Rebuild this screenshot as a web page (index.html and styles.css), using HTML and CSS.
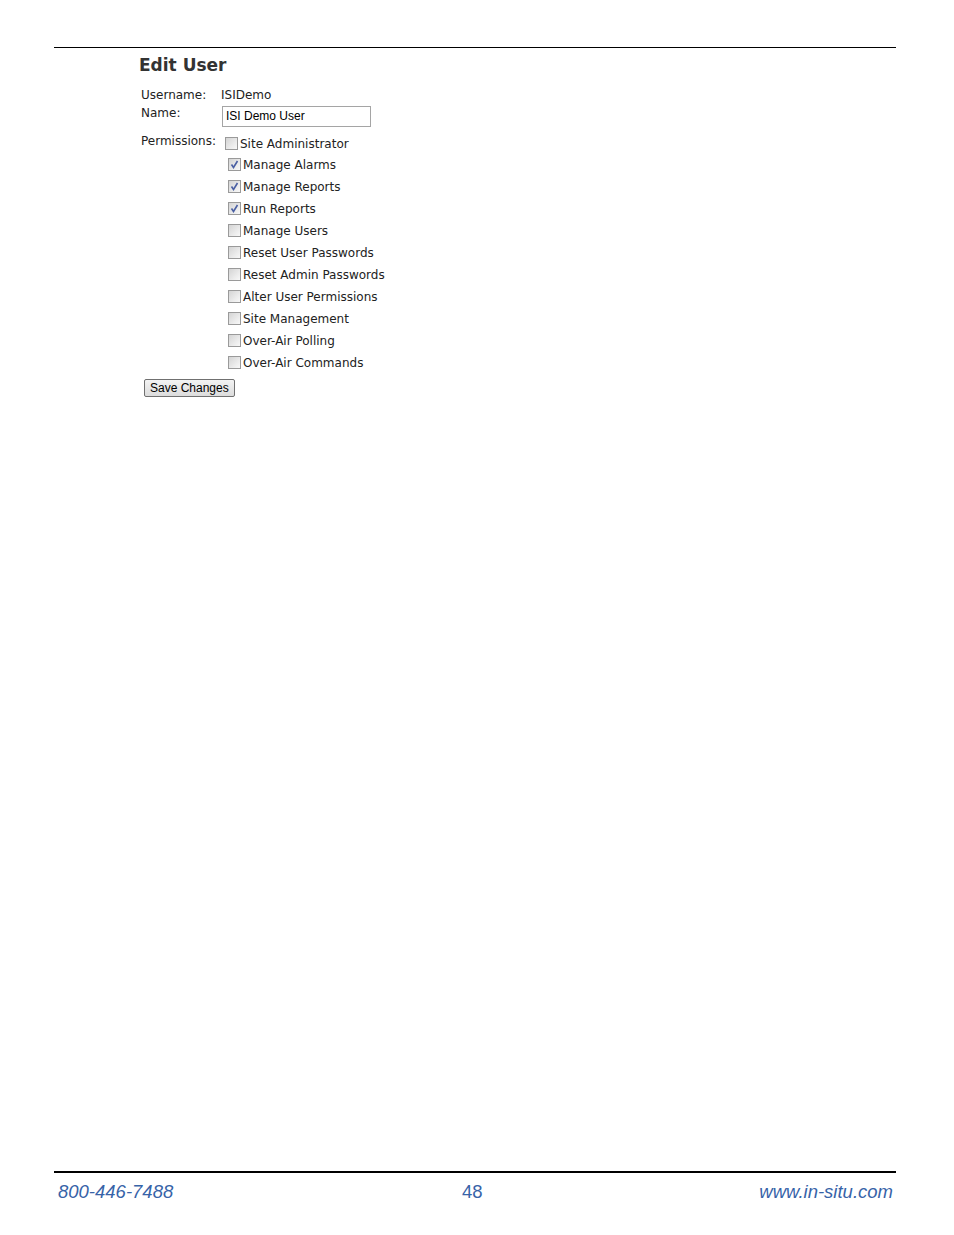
FILE: index.html
```html
<!DOCTYPE html>
<html>
<head>
<meta charset="utf-8">
<title>Edit User</title>
<link rel="stylesheet" href="styles.css">
</head>
<body>
<div class="page">
  <div class="rule-top"></div>
  <main class="content">
    <h1 class="title">Edit User</h1>
    <div class="form">
      <div class="row row-user">
        <div class="label">Username:</div>
        <div class="value">ISIDemo</div>
      </div>
      <div class="row row-name">
        <div class="label">Name:</div>
        <div class="value"><div class="input">ISI Demo User</div></div>
      </div>
      <div class="row row-perm">
        <div class="label">Permissions:</div>
        <div class="value">
          <div class="perm first"><span class="cb"></span>Site Administrator</div>
          <div class="perm"><span class="cb checked"><svg viewBox="0 0 13 13" width="13" height="13"><path d="M3.5 6.5 L5.5 9.5 L9.5 3" fill="none" stroke="#4a5fa3" stroke-width="1.6"/></svg></span>Manage Alarms</div>
          <div class="perm"><span class="cb checked"><svg viewBox="0 0 13 13" width="13" height="13"><path d="M3.5 6.5 L5.5 9.5 L9.5 3" fill="none" stroke="#4a5fa3" stroke-width="1.6"/></svg></span>Manage Reports</div>
          <div class="perm"><span class="cb checked"><svg viewBox="0 0 13 13" width="13" height="13"><path d="M3.5 6.5 L5.5 9.5 L9.5 3" fill="none" stroke="#4a5fa3" stroke-width="1.6"/></svg></span>Run Reports</div>
          <div class="perm"><span class="cb"></span>Manage Users</div>
          <div class="perm"><span class="cb"></span>Reset User Passwords</div>
          <div class="perm"><span class="cb"></span>Reset Admin Passwords</div>
          <div class="perm"><span class="cb"></span>Alter User Permissions</div>
          <div class="perm"><span class="cb"></span>Site Management</div>
          <div class="perm"><span class="cb"></span>Over-Air Polling</div>
          <div class="perm"><span class="cb"></span>Over-Air Commands</div>
        </div>
      </div>
      <div class="actions"><span class="btn">Save Changes</span></div>
    </div>
  </main>
  <footer class="footer">
    <div class="rule-bottom"></div>
    <div class="footer-text">
      <span>800-446-7488</span>
      <span class="pagenum">48</span>
      <span>www.in-situ.com</span>
    </div>
  </footer>
</div>
</body>
</html>
```
FILE: styles.css
```css
html, body {
  margin: 0;
  padding: 0;
  background: #fff;
}
.page {
  height: 1235px;
  box-sizing: border-box;
  padding: 47px 58px 0 54px;
  display: flex;
  flex-direction: column;
  font-family: "DejaVu Sans", Verdana, sans-serif;
  color: #222;
}
.rule-top {
  height: 1px;
  background: #000;
}
.content {
  padding-left: 85px;
}
.title {
  margin: 7px 0 0 0;
  font-size: 17px;
  line-height: 20px;
  font-weight: bold;
  color: #333;
}
.form {
  margin-top: 13px;
  padding-left: 2px;
  font-size: 12px;
}
.row {
  display: flex;
}
.label {
  width: 80px;
  flex: none;
}
.row-user {
  line-height: 15px;
  height: 15px;
}
.row-name {
  margin-top: 3px;
  line-height: 15px;
}
.input {
  box-sizing: border-box;
  width: 149px;
  height: 21px;
  margin-left: 1px;
  border: 1px solid #a5a5a5;
  font-family: "Liberation Sans", Arial, sans-serif;
  font-size: 12px;
  line-height: 19px;
  padding-left: 3px;
  color: #000;
}
.row-perm {
  margin-top: 7px;
}
.row-perm .label {
  line-height: 15px;
}
.perm {
  display: flex;
  align-items: center;
  height: 22px;
  margin-left: 7px;
  white-space: nowrap;
}
.perm.first {
  margin-left: 4px;
  height: 20px;
  margin-top: 0;
}
.cb {
  box-sizing: border-box;
  width: 13px;
  height: 13px;
  margin-right: 2px;
  margin-bottom: 2px;
  border: 1px solid #9a9a9a;
  background: linear-gradient(135deg, #d4d4d4 0%, #eeeeee 70%, #f8f8f8 100%);
  display: inline-block;
  position: relative;
  flex: none;
}
.cb svg {
  position: absolute;
  left: -1px;
  top: -1px;
}
.actions {
  margin-top: 5px;
  margin-left: 3px;
}
.btn {
  display: inline-block;
  box-sizing: border-box;
  height: 18px;
  padding: 0 5px;
  border: 1px solid #707070;
  border-radius: 2px;
  background: linear-gradient(#f3f3f3, #dcdcdc);
  font-family: "Liberation Sans", Arial, sans-serif;
  font-size: 12px;
  line-height: 16px;
  color: #000;
}
.footer {
  margin-top: auto;
  margin-bottom: 32px;
}
.rule-bottom {
  height: 2px;
  background: #000;
}
.footer-text {
  display: flex;
  justify-content: space-between;
  padding: 8px 3px 0 4px;
  font-family: "Liberation Sans", Arial, sans-serif;
  font-style: italic;
  font-size: 18.5px;
  line-height: 22px;
  color: #3763a8;
}
.pagenum {
  font-style: normal;
  margin-left: 12px;
}
```
